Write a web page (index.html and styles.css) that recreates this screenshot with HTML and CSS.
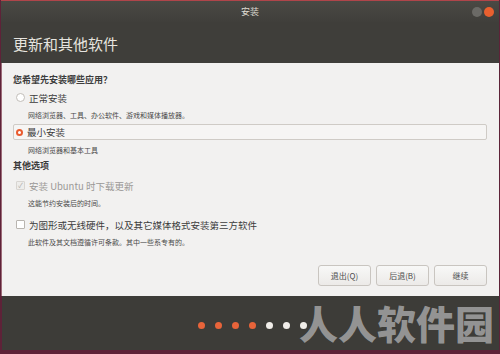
FILE: index.html
```html
<!DOCTYPE html>
<html lang="zh-CN">
<head>
    <meta charset="UTF-8">
    <title>安装</title>
    <link rel="stylesheet" href="styles.css">
</head>
<body>
    <div class="window">
        <div class="titlebar">
            <span class="title">安装</span>
            <div class="controls">
                <span class="ctl ctl-min"></span>
                <span class="ctl ctl-close"></span>
            </div>
        </div>
        <div class="header">更新和其他软件</div>
        <div class="content">
            <div class="question">您希望先安装哪些应用？</div>
            <div class="option first">
                <span class="radio"></span>
                <span class="label">正常安装</span>
            </div>
            <div class="desc">网络浏览器、工具、办公软件、游戏和媒体播放器。</div>
            <div class="option selected">
                <span class="radio on"></span>
                <span class="label">最小安装</span>
            </div>
            <div class="desc">网络浏览器和基本工具</div>
            <div class="question heading2">其他选项</div>
            <div class="option disabled">
                <span class="check checked">&#10003;</span>
                <span class="label">安装 Ubuntu 时下载更新</span>
            </div>
            <div class="desc">这能节约安装后的时间。</div>
            <div class="option third-party">
                <span class="check"></span>
                <span class="label">为图形或无线硬件，以及其它媒体格式安装第三方软件</span>
            </div>
            <div class="desc">此软件及其文档遵循许可条款。其中一些系专有的。</div>
            <div class="buttons">
                <button>退出(Q)</button>
                <button>后退(B)</button>
                <button>继续</button>
            </div>
        </div>
        <div class="footer">
            <div class="dots">
                <span class="dot done"></span>
                <span class="dot done"></span>
                <span class="dot done"></span>
                <span class="dot done"></span>
                <span class="dot"></span>
                <span class="dot"></span>
                <span class="dot"></span>
            </div>
        </div>
        <div class="watermark">人人软件园</div>
    </div>
</body>
</html>
```

FILE: styles.css
```css
body {
    margin: 0;
    width: 500px;
    height: 354px;
    background: #5e2238;
    font-family: "Noto Sans CJK SC", "Noto Sans", sans-serif;
    overflow: hidden;
}
.window {
    position: relative;
    height: 350px;
    margin: 0 1px;
    border-top: 1px solid #b0454a;
    box-sizing: border-box;
    display: flex;
    flex-direction: column;
}
.titlebar {
    height: 21px;
    background: linear-gradient(#4a4944, #403f3b);
    display: flex;
    align-items: center;
    justify-content: center;
    position: relative;
}
.title {
    color: #dfdbd2;
    font-size: 9px;
}
.controls {
    position: absolute;
    right: 5px;
    top: 6px;
    display: flex;
    gap: 2px;
}
.ctl {
    width: 10px;
    height: 10px;
    border-radius: 50%;
    background: #6b6a66;
}
.ctl-close {
    background: #e9602f;
}
.header {
    height: 41px;
    background: #3f3e3a;
    color: #e6e4df;
    font-size: 15px;
    padding-left: 12px;
    line-height: 44px;
}
.content {
    height: 233px;
    background: #f2f1f0;
    border-left: 1px solid #9c6b78;
    padding: 11px 12px 0 11px;
    box-sizing: border-box;
    display: flex;
    flex-direction: column;
    color: #3c3c3c;
}
.question {
    font-size: 9px;
    font-weight: bold;
    line-height: 12px;
    height: 12px;
}
.heading2 {
    margin-top: 5px;
}
.option {
    display: flex;
    align-items: center;
    height: 15px;
    margin-top: 3px;
    font-size: 9.5px;
    padding-left: 2px;
    border: 1px solid transparent;
    border-radius: 2px;
    box-sizing: border-box;
}
.option.first {
    margin-top: 4px;
}
.option.selected {
    border-color: #cfcbc6;
    background: #f6f5f4;
    height: 16px;
    margin-top: 4px;
}
.option.disabled {
    color: #9a9896;
    margin-top: 6px;
}
.option.third-party {
    margin-top: 9px;
}
.label {
    margin-left: 4px;
}
.radio {
    width: 7px;
    height: 7px;
    border-radius: 50%;
    border: 1px solid #c2beb9;
    background: #fff;
}
.radio.on {
    border: 2.5px solid #e95b2e;
    width: 3px;
    height: 3px;
}
.check {
    width: 7px;
    height: 7px;
    border: 1px solid #b9b5b0;
    border-radius: 1px;
    background: #fff;
    font-size: 7px;
    line-height: 7px;
    text-align: center;
    color: #b0aeab;
}
.check.checked {
    border-color: #d8d5d1;
    background: #eeedeb;
}
.desc {
    font-size: 7px;
    line-height: 10px;
    margin-top: 5px;
    padding-left: 15px;
    color: #4a4a4a;
}
.buttons {
    display: flex;
    justify-content: flex-end;
    gap: 5px;
    margin-top: 18px;
}
button {
    width: 53px;
    height: 21px;
    font-family: "Noto Sans CJK SC", "Noto Sans", sans-serif;
    font-size: 8px;
    color: #4c4c4c;
    background: linear-gradient(#f8f8f7, #eceae8);
    border: 1px solid #c9c5c0;
    border-radius: 3px;
    padding: 0;
}
.footer {
    flex: 1;
    background: #3d3c38;
    border-left: 1px solid #5e2238;
    display: flex;
    justify-content: center;
}
.dots {
    display: flex;
    gap: 10px;
    margin-top: 26px;
    margin-left: 4px;
}
.dot {
    width: 7px;
    height: 7px;
    border-radius: 50%;
    background: #f0ede9;
}
.dot.done {
    background: #e8643a;
}
.watermark {
    position: absolute;
    right: 5px;
    bottom: 2px;
    font-size: 39px;
    font-weight: 900;
    color: rgba(160, 160, 160, 0.9);
    line-height: 52px;
}
```
